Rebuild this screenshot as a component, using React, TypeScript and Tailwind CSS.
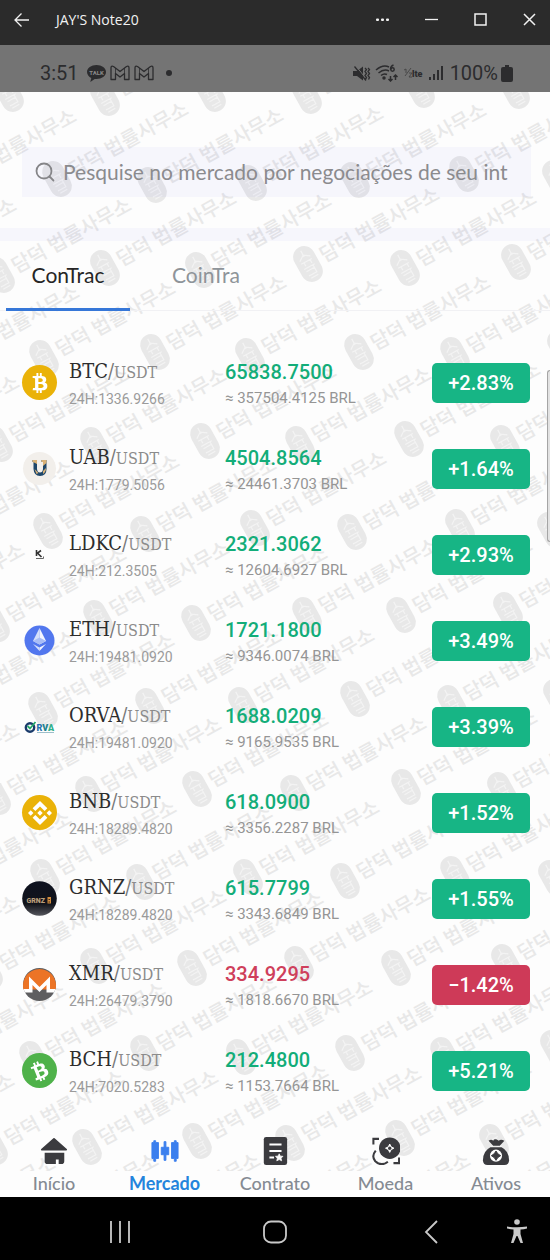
import React from "react";
import { FaBtc } from "react-icons/fa6";
import { SiBinance } from "react-icons/si";

type Market = {
  symbol: string;
  volume: string;
  price: string;
  brl: string;
  change: string;
  down?: boolean;
  icon: React.ReactNode;
};

const marks: [number, number][] = [
  [9, 94], [105, 98], [211, 94], [307, 96], [420, 90], [515, 91],
  [-55, 186], [57, 179], [152, 185], [252, 183], [355, 180], [464, 174], [557, 178],
  [-115, 275], [0, 275], [105, 268], [200, 270], [308, 264], [405, 268], [516, 262],
  [-52, 362], [44, 358], [155, 352], [250, 356], [359, 352], [455, 355], [562, 348],
  [-112, 452], [-2, 444], [95, 445], [205, 441], [300, 444], [409, 439], [505, 443],
  [-58, 537], [48, 531], [145, 534], [255, 528], [352, 532], [460, 527], [552, 530],
  [-107, 620], [-5, 624], [98, 618], [196, 623], [307, 615], [401, 615], [508, 610],
  [-55, 707], [43, 710], [150, 706], [243, 705], [355, 699], [452, 703], [558, 697],
  [-112, 800], [-4, 797], [90, 794], [197, 789], [295, 793], [406, 787], [502, 790],
  [-60, 888], [45, 877], [141, 882], [248, 877], [345, 881], [455, 874], [553, 878],
  [-112, 972], [-12, 972], [95, 966], [192, 968], [299, 964], [396, 968], [506, 962],
  [-65, 1060], [34, 1059], [145, 1053], [241, 1057], [350, 1053], [445, 1055], [555, 1048],
  [-117, 1150], [-7, 1147], [87, 1147], [197, 1141], [290, 1143], [400, 1138], [494, 1142],
  [-76, 1233], [27, 1230], [129, 1230], [240, 1230], [339, 1230], [440, 1230],
];

function Watermark() {
  return (
    <svg aria-hidden="true" className="pointer-events-none absolute inset-x-0 top-0 h-[calc(100%-26px)] w-full overflow-hidden">
      <defs>
        <g id="mark">
          <rect x="-11" y="-19" width="22" height="38" rx="11" fill="#e8e8e8" />
          <path
            d="M0-15v7M-6-6l6-4 6 4M-6-3h12M-3-3v4M4-3v4M-6 3h12M-5 6h9v5h-9M4 3v8M-4 14h8"
            fill="none"
            stroke="#f3f3f3"
            strokeWidth="1.2"
          />
          <text x="15" y="7" fontSize="20" fontWeight="500" fill="#e8e8e8" fontFamily="'Noto Sans CJK KR', sans-serif">
            담덕 법률사무소
          </text>
        </g>
      </defs>
      {marks.map(([x, y]) => (
        <use key={`${x}-${y}`} href="#mark" transform={`translate(${x} ${y - 92}) rotate(-29)`} />
      ))}
    </svg>
  );
}

function Eth() {
  return (
    <svg viewBox="0 0 35 35" className="size-[35px]">
      <circle cx="17.5" cy="17.5" r="15" fill="#5277ee" />
      <path d="M17.5 5 11 18l6.500 3.500z" fill="#d5dffb" />
      <path d="m17.500 5 6.500 13-6.500 3.500z" fill="#f4f6ff" />
      <path d="m11 18 6.500-3.500L24 18l-6.500 3.500z" fill="#a9bdf6" />
      <path d="m11 21 6.500 7v-3.500z" fill="#d5dffb" />
      <path d="m24 21-6.500 7v-3.500z" fill="#f4f6ff" />
    </svg>
  );
}

function Uab() {
  return (
    <svg viewBox="0 0 35 35" className="size-[35px]">
      <circle cx="17.500" cy="17.500" r="16.500" fill="#f2efeb" />
      <path d="M10.500 9h4.500v9q.3 3.500 3 3.500t3-3.500v-7h-1.500V9h5v9q0 7-6.500 7-6 0-6.500-7v-7h-1z" fill="#1d466a" />
      <path d="M10.500 9h4.500v4l-3-1.500-1.500-.5zM19.500 9h5v3l-3.500 3v-4h-1.500zM12.500 18l4 4-2 1zM21 20l3-3q0 4-3 6z" fill="#d9b176" />
    </svg>
  );
}

function Ldkc() {
  return (
    <svg viewBox="0 0 35 35" className="size-[35px]">
      <path d="M14.500 13v6M19 13.500 15.500 16l4 4" fill="none" stroke="#333" strokeWidth="1.600" />
      <path d="M14 21.500h7.500v-2" fill="none" stroke="#666" strokeWidth="1" />
    </svg>
  );
}

function Orva() {
  return (
    <svg viewBox="0 0 35 35" className="size-[35px]">
      <circle cx="8" cy="18.500" r="4.200" fill="none" stroke="#1a3b6b" strokeWidth="2.400" />
      <path d="m5.500 17 2.500 2.500 5.500-6.500" fill="none" stroke="#25a869" strokeWidth="1.800" />
      <text x="14.500" y="21.500" fontSize="9" fontWeight="900" fontFamily="Roboto, sans-serif">
        <tspan fill="#2672ae">R</tspan>
        <tspan fill="#20808f">V</tspan>
        <tspan fill="#2eb08a">A</tspan>
      </text>
      <path d="M15 23.500h17" stroke="#9dbfca" strokeWidth="1" />
    </svg>
  );
}

function Grnz() {
  return (
    <svg viewBox="0 0 35 35" className="size-[35px]">
      <defs>
        <linearGradient id="grnz" x1="0" y1="0" x2="0" y2="1">
          <stop offset="0" stopColor="#0e1220" />
          <stop offset="0.65" stopColor="#11131a" />
          <stop offset="1" stopColor="#55565c" />
        </linearGradient>
      </defs>
      <circle cx="17.500" cy="17.500" r="17.300" fill="url(#grnz)" />
      <text x="4.500" y="21.500" fontSize="7" fontWeight="900" fill="#b99d78" fontFamily="Roboto, sans-serif">
        GRNZ
      </text>
      <path d="M25.500 16h3.500v6.500h-3.500z" fill="#d18b3c" />
      <path d="M26.500 18h1.500v1h-1.500zM26.500 20.500h1.500v1h-1.500z" fill="#3a2a18" />
    </svg>
  );
}

function Xmr() {
  return (
    <svg viewBox="0 0 35 35" className="size-[35px]">
      <circle cx="17.500" cy="17.500" r="16.500" fill="#5e5e60" />
      <path d="M1.500 22.500A16.500 16.500 0 1 1 33.500 22.500z" fill="#ec7426" />
      <path d="M1.500 22H7V9.500l10.500 10.500L28 9.500V22h5.500l-1.500 3.500h-7.500V18l-7 7-7-7v7.500H3z" fill="#fff" />
    </svg>
  );
}

const disc = "flex size-[35px] items-center justify-center rounded-full text-white";

const markets: Market[] = [
  { symbol: "BTC", volume: "1336.9266", price: "65838.7500", brl: "357504.4125", change: "+2.83%", icon: <span className={`${disc} bg-[#eab208]`}><FaBtc size={20} /></span> },
  { symbol: "UAB", volume: "1779.5056", price: "4504.8564", brl: "24461.3703", change: "+1.64%", icon: <Uab /> },
  { symbol: "LDKC", volume: "212.3505", price: "2321.3062", brl: "12604.6927", change: "+2.93%", icon: <Ldkc /> },
  { symbol: "ETH", volume: "19481.0920", price: "1721.1800", brl: "9346.0074", change: "+3.49%", icon: <Eth /> },
  { symbol: "ORVA", volume: "19481.0920", price: "1688.0209", brl: "9165.9535", change: "+3.39%", icon: <Orva /> },
  { symbol: "BNB", volume: "18289.4820", price: "618.0900", brl: "3356.2287", change: "+1.52%", icon: <span className={`${disc} bg-[#eab208]`}><SiBinance size={24} /></span> },
  { symbol: "GRNZ", volume: "18289.4820", price: "615.7799", brl: "3343.6849", change: "+1.55%", icon: <Grnz /> },
  { symbol: "XMR", volume: "26479.3790", price: "334.9295", brl: "1818.6670", change: "−1.42%", down: true, icon: <Xmr /> },
  { symbol: "BCH", volume: "7020.5283", price: "212.4800", brl: "1153.7664", change: "+5.21%", icon: <span className={`${disc} bg-[#4fb24a]`}><FaBtc size={20} className="-rotate-[22deg]" /></span> },
];

function TitleBar() {
  return (
    <header className="flex h-[45px] items-center bg-[#2b2b2b] px-[14px] pb-[6px] text-[#f2f2f2]">
      <button aria-label="Voltar">
        <svg viewBox="0 0 16 16" className="size-4" fill="none" stroke="currentColor" strokeWidth="1.300">
          <path d="M15 8H1M7.500 1.500 1 8l6.500 6.500" />
        </svg>
      </button>
      <h1 className="ml-[26px] flex-1 font-['Open_Sans',sans-serif] text-[14px] font-medium leading-5">JAY'S Note20</h1>
      <div className="flex items-center gap-[36px]">
        <button aria-label="Mais">
          <svg viewBox="0 0 13 13" className="size-[13px]" fill="currentColor">
            <rect x="0" y="5.500" width="3" height="2.500" rx="1" />
            <rect x="5" y="5.500" width="3" height="2.500" rx="1" />
            <rect x="10" y="5.500" width="3" height="2.500" rx="1" />
          </svg>
        </button>
        <button aria-label="Minimizar">
          <svg viewBox="0 0 13 13" className="size-[13px]" stroke="currentColor" strokeWidth="1.300"><path d="M0 6.500h13" /></svg>
        </button>
        <button aria-label="Maximizar">
          <svg viewBox="0 0 13 13" className="size-[13px]" fill="none" stroke="currentColor" strokeWidth="1.500"><path d="M1 1h11v11H1z" /></svg>
        </button>
        <button aria-label="Fechar">
          <svg viewBox="0 0 13 13" className="size-[13px]" stroke="currentColor" strokeWidth="1.500"><path d="m1 1 11 11M12 1 1 12" /></svg>
        </button>
      </div>
    </header>
  );
}

function Mail() {
  return (
    <svg viewBox="0 0 20 16" className="h-4 w-5" fill="none" stroke="currentColor" strokeWidth="1.300" strokeLinejoin="round">
      <path d="M1 3q0-2.500 2.500-1.500L10 6.500l6.500-5Q19 .5 19 3v11.500h-4.500V8.500L10 12 5.500 8.500v6H1z" />
      <path d="M5.500 8.500V3M14.500 8.500V3" strokeWidth=".8" />
    </svg>
  );
}

function StatusBar() {
  return (
    <div className="flex h-[47px] items-center bg-[#747474] pl-[40px] pr-[37px] pt-[9px] font-[Roboto,sans-serif] text-[20px] leading-6 text-[#2c2c2e]">
      <span>3:51</span>
      <div className="ml-2 flex flex-1 items-center gap-1">
        <svg viewBox="0 0 19 18" className="h-[18px] w-[19px]">
          <path d="M9.500 1C4.300 1 0 4 0 8c0 2.600 1.800 4.700 4.300 6l-1 4 4.400-3h1.800c5.200 0 9.500-3 9.500-7s-4.300-7-9.500-7" fill="#2c2c2e" />
          <text x="9.500" y="10.500" textAnchor="middle" fontSize="6" fontWeight="700" fill="#8b8b8b" fontFamily="Roboto, sans-serif">TALK</text>
        </svg>
        <Mail />
        <Mail />
        <i className="ml-2 size-[6px] rounded-full bg-[#2c2c2e]" />
      </div>
      <div className="flex items-center gap-1">
        <svg viewBox="0 0 18 17" className="h-[17px] w-[18px]" fill="currentColor">
          <path d="M0 6h4l6-4.500v14L4 11H0z" />
          <path d="m3 1 11 14" stroke="#747474" strokeWidth="1" />
          <path d="m1.500 1.500 11.500 14M12 3l1.500 1.500L12 6.500l1.500 2-1.500 2 1.500 2-1 2M15 3l1.500 1.500-1.500 2 1.500 2-1.500 2 1.500 2-1 2" fill="none" stroke="currentColor" strokeWidth="1.300" />
        </svg>
        <svg viewBox="0 0 24 18" className="h-[18px] w-6" fill="none" stroke="currentColor" strokeWidth="1.500">
          <path d="M1 6q7-6 13-3M3.500 9Q9 4.500 14 7M6 11.500q3-2.500 6-1" />
          <circle cx="9" cy="14" r="1" fill="currentColor" />
          <path d="M18.500 1q-3 1-3 4.500M15.500 12v5m-2-2 2 2 2-2M20.500 16v-5m-2 2 2-2 2 2" />
          <circle cx="17.500" cy="5.500" r="1.700" />
        </svg>
        <svg viewBox="0 0 22 12" className="h-3 w-[22px]">
          <path d="M1 3l2-1v4M8 1 2 9M6 6h3L6 10h3" fill="none" stroke="#444" strokeWidth=".9" />
          <text x="9" y="10" fontSize="9" fontWeight="900" fill="#2c2c2e" fontFamily="Roboto, sans-serif">lte</text>
        </svg>
        <svg viewBox="0 0 16 16" className="size-4" fill="currentColor">
          <path d="M0 12h2v3H0zM4 9h2v6H4zM8 5h2v10H8zM12 1h2v14h-2z" />
        </svg>
      </div>
      <span className="ml-[5px]">100%</span>
      <svg viewBox="0 0 12 17" className="ml-[3px] h-[17px] w-3" fill="currentColor">
        <path d="M4 0h4v2h2q2 0 2 2v11q0 2-2 2H2q-2 0-2-2V4q0-2 2-2h2z" />
      </svg>
    </div>
  );
}

function Row({ m }: { m: Market }) {
  return (
    <tr className="h-[86px] align-top">
      <td className="w-[225px] p-0 pl-[22px]">
        <div className="flex gap-3">
          <div className="pt-[26px]">{m.icon}</div>
          <div className="pt-[18px]">
            <div className="font-['DejaVu_Serif_Condensed','Liberation_Serif',serif] text-[20px] leading-7 text-[#2d2d2d]">
              {m.symbol}
              <span className="text-[#777]">/</span>
              <span className="text-[16px] text-[#8b8b8b]">USDT</span>
            </div>
            <div className="text-[14px] leading-6 text-[#9b9b9b]">24H:{m.volume}</div>
          </div>
        </div>
      </td>
      <td className="p-0 pt-[19px]">
        <div className={`text-[20px] font-medium leading-7 ${m.down ? "text-[#cf3f5b]" : "text-[#13ad79]"}`}>{m.price}</div>
        <div className="text-[15px] leading-6 text-[#959595]">≈ {m.brl} BRL</div>
      </td>
      <td className="w-[118px] p-0 pr-5 pt-[24px]">
        <button className={`h-10 w-[98px] rounded-[5px] text-[20px] font-medium leading-6 text-white ${m.down ? "bg-[#ce3a58]" : "bg-[#17b585]"}`}>
          {m.change}
        </button>
      </td>
    </tr>
  );
}

const navItems = [
  {
    label: "Início",
    icon: (
      <>
        <path d="M15 2 2 13.500h26z" strokeWidth="2" stroke="currentColor" strokeLinejoin="round" />
        <path d="M5 17h21v9q0 3-3 3h-3v-5h-3v5H8q-3 0-3-3z" />
      </>
    ),
  },
  {
    label: "Mercado",
    active: true,
    icon: (
      <path d="M1 6h2V4h2v2h3v17H5v3H3v-3H1zM14 5h2v6h3v8h-3v6h-2v-6h-3v-8h3zM22 6h3V4h2v2h2v17h-2v3h-2v-3h-3z" stroke="currentColor" strokeLinejoin="round" />
    ),
  },
  {
    label: "Contrato",
    icon: (
      <>
        <rect x="3" y="0" width="25" height="30" rx="2.500" />
        <path d="M9 8h13M9 15h13M9 22h5" stroke="#fff" strokeWidth="2" />
        <path d="m19.500 18 1.200 2.500 2.800.2-2 2 .6 2.800-2.600-1.300-2.600 1.300.6-2.800-2-2 2.800-.2z" fill="#fff" stroke="#fff" strokeWidth=".8" />
      </>
    ),
  },
  {
    label: "Moeda",
    icon: (
      <>
        <circle cx="19" cy="12" r="11.500" />
        <path d="m19 7.500 1.500 3 3 1.500-3 1.500-1.500 3-1.500-3-3-1.500 3-1.500z" fill="#fff" stroke="#fff" strokeLinejoin="round" />
        <circle cx="19" cy="12" r="1.800" />
        <path d="M1.500 8V2h6M29 22v6h-6M4 14.500q-5 6-.5 11.500 6.500 6 13.500.500" fill="none" stroke="currentColor" strokeWidth="2.200" />
      </>
    ),
  },
  {
    label: "Ativos",
    icon: (
      <>
        <path d="M7 4q3-2 5 0 1.500-3 6 0 2-2 6 0l-5 5.500h-7z" />
        <path d="M9 11h12q8 4 8 14 0 5-5 5H6q-5 0-5-5 0-10 8-14" />
        <circle cx="15" cy="20" r="6.500" fill="#fff" />
        <path d="m15 15 2 3 3 2-3 2-2 3-2-3-3-2 3-2z" stroke="currentColor" strokeLinejoin="round" />
      </>
    ),
  },
];

export default function App() {
  return (
    <div className="flex min-h-screen flex-col bg-black font-[Roboto,sans-serif]">
      <TitleBar />
      <StatusBar />
      <main className="relative flex-1 bg-[#fdfdfd]">
        <Watermark />
        <div className="relative pt-[55px]">
          <div className="ml-[22px] mr-[19px] flex h-[50px] items-center bg-[#5050f0]/4 pl-[13px] pr-2">
            <svg viewBox="0 0 20 20" className="size-5 shrink-0" fill="none" stroke="#858588" strokeWidth="1.800" strokeLinecap="round">
              <circle cx="9" cy="9" r="7.500" />
              <path d="m14.500 14.500 4 4" />
            </svg>
            <input
              type="text"
              aria-label="Pesquisar"
              placeholder="Pesquise no mercado por negociações de seu int"
              className="ml-2 h-7 min-w-0 flex-1 bg-transparent p-0 font-[Lato,sans-serif] text-[21px] leading-7 outline-none placeholder:text-[#8b8b8e]"
            />
          </div>
          <div className="mt-[31px] h-[13px] bg-[#5050f0]/4" />
          <div role="tablist" className="flex h-[70px] gap-[14px] border-b border-[#f1f1f4] pl-[6px] font-[Lato,sans-serif] text-[21px] leading-7">
            <button role="tab" aria-selected="true" className="-mb-px w-[124px] border-b-[3px] border-[#3677d8] text-[#262626]">ConTrac</button>
            <button role="tab" aria-selected="false" className="w-[124px] pb-[2px] text-[#8e9499]">CoinTra</button>
          </div>
          <table className="mt-7 w-full border-collapse">
            <tbody>
              {markets.map((m) => (
                <Row key={m.symbol} m={m} />
              ))}
            </tbody>
          </table>
          <nav className="flex justify-between pb-[2px] pt-[24px]">
            {navItems.map((n) => (
              <a key={n.label} href={`#${n.label}`} className={`flex w-[108px] flex-col items-center gap-[7px] ${n.active ? "text-[#3b7fee]" : "text-[#3b3b3f]"}`}>
                <svg viewBox="0 0 30 30" className="size-7" fill="currentColor">{n.icon}</svg>
                <span className={`font-[Lato,sans-serif] text-[18px] leading-[23px] ${n.active ? "font-bold text-[#2484dc]" : "font-medium text-[#858b93]"}`}>{n.label}</span>
              </a>
            ))}
          </nav>
        </div>
        <div className="absolute right-0 top-[278px] h-[172px] w-[3px] rounded-l-[3px] border-y border-l border-[#a5a5a5] bg-[#e2e2e2]" />
      </main>
      <footer className="flex h-[63px] items-center pl-[109px] pr-[23px] pt-[6px] text-[#c9c9c9]">
        <div className="flex flex-1 items-center justify-between">
          <button aria-label="Recentes">
            <svg viewBox="0 0 22 22" className="size-[22px]" stroke="currentColor" strokeWidth="1.800"><path d="M2 0v22M11 0v22M20 0v22" /></svg>
          </button>
          <button aria-label="Início">
            <svg viewBox="0 0 24 24" className="size-6" fill="none" stroke="currentColor" strokeWidth="1.800"><rect x="1" y="1.500" width="22" height="21" rx="7" /></svg>
          </button>
          <button aria-label="Voltar" className="flex w-5 justify-end">
            <svg viewBox="0 0 14 24" className="h-6 w-[14px]" fill="none" stroke="currentColor" strokeWidth="1.800"><path d="M13 1 2 12l11 11" /></svg>
          </button>
        </div>
        <button aria-label="Acessibilidade" className="ml-[69px]">
          <svg viewBox="0 0 20 25" className="h-[25px] w-5" fill="currentColor">
            <circle cx="10" cy="3" r="2.800" />
            <path d="M0 7.500q10 1.500 20 0v2q-3 .8-6.500 1V15l2.500 9h-2.500L10.500 17h-1L6.500 24H4l2.500-9v-4.500q-3.500-.2-6.500-1z" />
          </svg>
        </button>
      </footer>
    </div>
  );
}
